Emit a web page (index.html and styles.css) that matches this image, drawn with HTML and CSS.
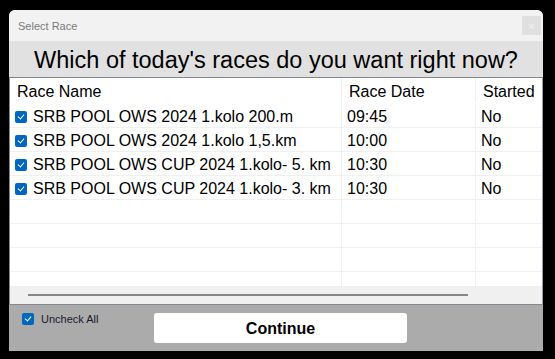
FILE: index.html
```html
<!DOCTYPE html>
<html lang="en">
<head>
    <meta charset="UTF-8">
    <title>Select Race</title>
    <link rel="stylesheet" href="styles.css">
</head>
<body>
    <div class="window">
        <div class="titlebar">
            <span class="title">Select Race</span>
            <span class="close">&times;</span>
        </div>
        <div class="prompt">Which of today's races do you want right now?</div>
        <div class="grid-box">
            <div class="rows">
                <table class="races">
                    <thead>
                        <tr>
                            <th class="col-name">Race Name</th>
                            <th class="col-date">Race Date</th>
                            <th class="col-started">Started</th>
                        </tr>
                    </thead>
                    <tbody id="race-rows"></tbody>
                </table>
            </div>
            <div class="hscroll"><div class="thumb"></div></div>
        </div>
        <div class="footer">
            <label class="uncheck"><span class="check small"></span>Uncheck All</label>
            <button class="continue">Continue</button>
        </div>
    </div>
    <script>
        const races = [
            { name: 'SRB POOL OWS 2024 1.kolo 200.m', date: '09:45', started: 'No' },
            { name: 'SRB POOL OWS 2024 1.kolo 1,5.km', date: '10:00', started: 'No' },
            { name: 'SRB POOL OWS CUP 2024 1.kolo- 5. km', date: '10:30', started: 'No' },
            { name: 'SRB POOL OWS CUP 2024 1.kolo- 3. km', date: '10:30', started: 'No' },
        ];

        const body = document.getElementById('race-rows');
        races.forEach(race => {
            const tr = document.createElement('tr');
            tr.innerHTML = `
                <td><span class="check"></span>${race.name}</td>
                <td>${race.date}</td>
                <td>${race.started}</td>
            `;
            body.appendChild(tr);
        });
        for (let i = 0; i < 4; i++) {
            const tr = document.createElement('tr');
            tr.className = 'empty';
            tr.innerHTML = '<td></td><td></td><td></td>';
            body.appendChild(tr);
        }
    </script>
</body>
</html>
```

FILE: styles.css
```css
body {
    margin: 0;
    padding: 0;
    background-color: #000;
    font-family: "Segoe UI", "Liberation Sans", Arial, sans-serif;
}

.window {
    margin: 10px 0 0 9px;
    width: 534px;
    height: 341px;
    background: #ababab;
    border-radius: 6px 6px 0 0;
    overflow: hidden;
    display: flex;
    flex-direction: column;
}

.titlebar {
    height: 31px;
    background: #f2f2f2;
    display: flex;
    justify-content: space-between;
    align-items: center;
    padding: 0 2px 0 9px;
}

.title {
    font-size: 11px;
    color: #7a7a7a;
}

.close {
    width: 19px;
    height: 19px;
    background: #e0e0e0;
    color: #f4f4f4;
    font-size: 11px;
    display: flex;
    align-items: center;
    justify-content: center;
}

.prompt {
    height: 36px;
    background: #e1e1e1;
    font-size: 23.5px;
    color: #000;
    text-align: center;
    line-height: 38px;
}

.grid-box {
    height: 226px;
    background: #fff;
    border: 1px solid #828790;
    border-right-color: #9a9ca6;
    display: flex;
    flex-direction: column;
}

.rows {
    flex: 1;
    overflow: hidden;
}

.races {
    border-collapse: collapse;
    width: 532px;
    table-layout: fixed;
    font-size: 16px;
    color: #000;
}

.races th {
    font-weight: normal;
    text-align: left;
    height: 23px;
    line-height: 23px;
    padding: 2px 0 0 7px;
    border-left: 1px solid #f0f0f0;
    border-bottom: 1px solid #fff;
}

.races th:first-child {
    border-left: none;
}

.races td {
    height: 21px;
    line-height: 21px;
    padding: 2px 0 0 5px;
    border-left: 1px solid #f0f0f0;
    border-top: 1px solid #f0f0f0;
    white-space: nowrap;
    overflow: hidden;
}

.races td:first-child {
    border-left: none;
    padding-left: 5px;
}

.col-name { width: 324px; }
.col-date { width: 126px; }

.check {
    display: inline-block;
    width: 12px;
    height: 12px;
    border-radius: 2px;
    background: #0067c0;
    margin-right: 6px;
    vertical-align: -1px;
    position: relative;
}

.check::after {
    content: "";
    position: absolute;
    left: 4px;
    top: 2px;
    width: 3px;
    height: 5px;
    border: solid #fff;
    border-width: 0 1px 1px 0;
    transform: rotate(40deg);
}

.hscroll {
    flex-shrink: 0;
    height: 18px;
    background: #f0f0f0;
    display: flex;
    align-items: center;
}

.thumb {
    margin-left: 18px;
    width: 440px;
    height: 2px;
    background: #858585;
}

.footer {
    flex: 1;
    display: flex;
    align-items: flex-start;
    padding: 7px 0 0 13px;
}

.uncheck {
    font-size: 11px;
    color: #1a1a2e;
    display: flex;
    align-items: center;
    width: 132px;
    margin-top: 1px;
}

.uncheck .check {
    margin-right: 7px;
    vertical-align: 0;
}

.continue {
    width: 253px;
    height: 30px;
    margin-top: 1px;
    padding-top: 3px;
    background: #fff;
    border: none;
    border-radius: 3px;
    font-family: "Liberation Sans", Arial, sans-serif;
    font-size: 16px;
    font-weight: bold;
    color: #000;
}
```
